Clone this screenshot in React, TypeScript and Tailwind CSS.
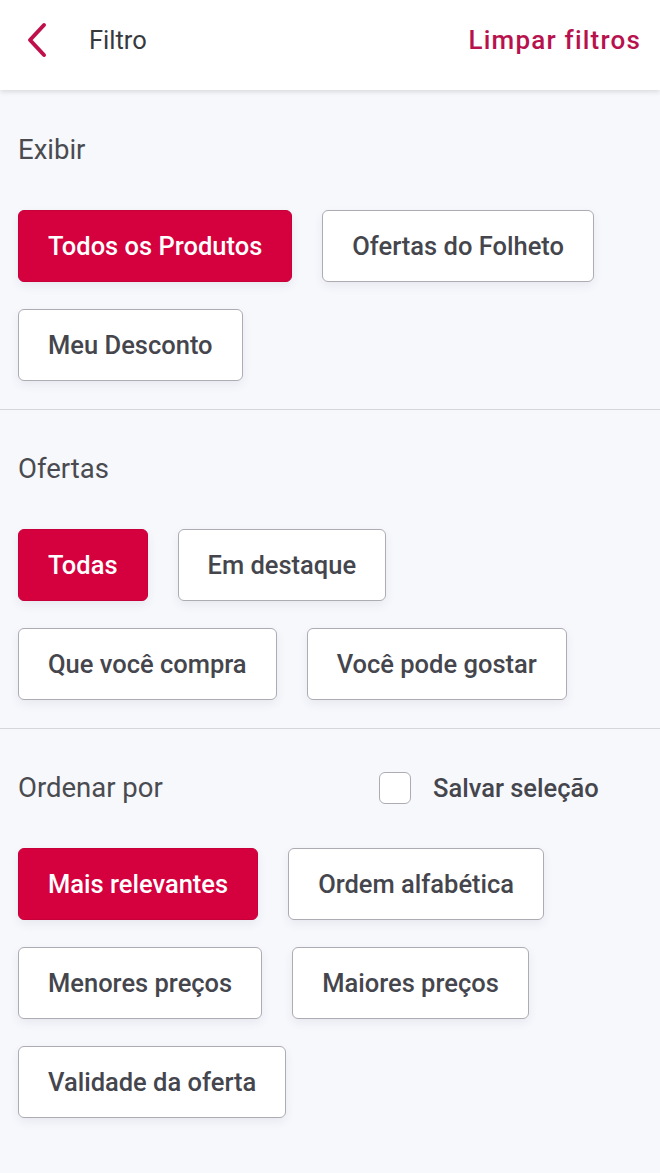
import React from "react";

const Btn = ({ label, active }: { label: string; active?: boolean }) => (
  <button
    className={
      active
        ? "h-[72px] px-[29px] rounded-[6px] bg-[#d5003e] text-white text-[25.5px] font-medium border border-[#c8003a] shadow-[0_4px_10px_rgba(60,60,100,0.08)]"
        : "h-[72px] px-[29px] rounded-[6px] bg-white text-[#45464d] text-[25.5px] font-medium border-[1.5px] border-[#acacb2] shadow-[0_4px_10px_rgba(60,60,100,0.08)]"
    }
  >
    {label}
  </button>
);

const Title = ({ children }: { children: React.ReactNode }) => (
  <div className="text-[27.5px] leading-[32px] text-[#4a4b50]">{children}</div>
);

export default function App() {
  return (
    <div
      className="w-[660px] h-[1173px] bg-[#f7f8fc] overflow-hidden"
      style={{ fontFamily: "Roboto, 'Noto Sans', sans-serif" }}
    >
      <header className="h-[90px] bg-white flex items-start pt-[24px] px-[18px] shadow-[0_2px_5px_rgba(0,0,0,0.12)] relative z-10">
        <div className="flex items-center h-[32px] w-full">
          <svg width="32" height="36" viewBox="0 0 32 36" className="ml-[6px]">
            <path d="M20 3 L6 18 L20 33" fill="none" stroke="#c0104c" strokeWidth="4" strokeLinecap="round" strokeLinejoin="round" />
          </svg>
          <span className="ml-[33px] text-[25.5px] text-[#38393d]">Filtro</span>
          <span className="ml-auto mr-[1px] text-[26px] font-medium text-[#b8124e] tracking-[1.2px]">Limpar filtros</span>
        </div>
      </header>

      <section className="px-[18px] pt-[44px] pb-[28px] border-b border-[#d6d6da]">
        <Title>Exibir</Title>
        <div className="mt-[44px] flex flex-wrap gap-x-[30px] gap-y-[27px]">
          <Btn label="Todos os Produtos" active />
          <Btn label="Ofertas do Folheto" />
          <Btn label="Meu Desconto" />
        </div>
      </section>

      <section className="px-[18px] pt-[43px] pb-[28px] border-b border-[#d6d6da]">
        <Title>Ofertas</Title>
        <div className="mt-[44px] flex flex-wrap gap-x-[30px] gap-y-[27px]">
          <Btn label="Todas" active />
          <Btn label="Em destaque" />
          <Btn label="Que você compra" />
          <Btn label="Você pode gostar" />
        </div>
      </section>

      <section className="px-[18px] pt-[43px] pb-[28px]">
        <div className="flex items-center h-[32px]">
          <div className="w-[361px]">
            <Title>Ordenar por</Title>
          </div>
          <div className="flex items-center">
            <div className="w-[32px] h-[32px] rounded-[6px] border-[1.5px] border-[#acacb2] bg-white" />
            <span className="ml-[22px] text-[25.5px] leading-[32px] font-medium text-[#45464d]">Salvar seleção</span>
          </div>
        </div>
        <div className="mt-[44px] flex flex-wrap gap-x-[30px] gap-y-[27px]">
          <Btn label="Mais relevantes" active />
          <Btn label="Ordem alfabética" />
          <Btn label="Menores preços" />
          <Btn label="Maiores preços" />
          <Btn label="Validade da oferta" />
        </div>
      </section>
    </div>
  );
}
